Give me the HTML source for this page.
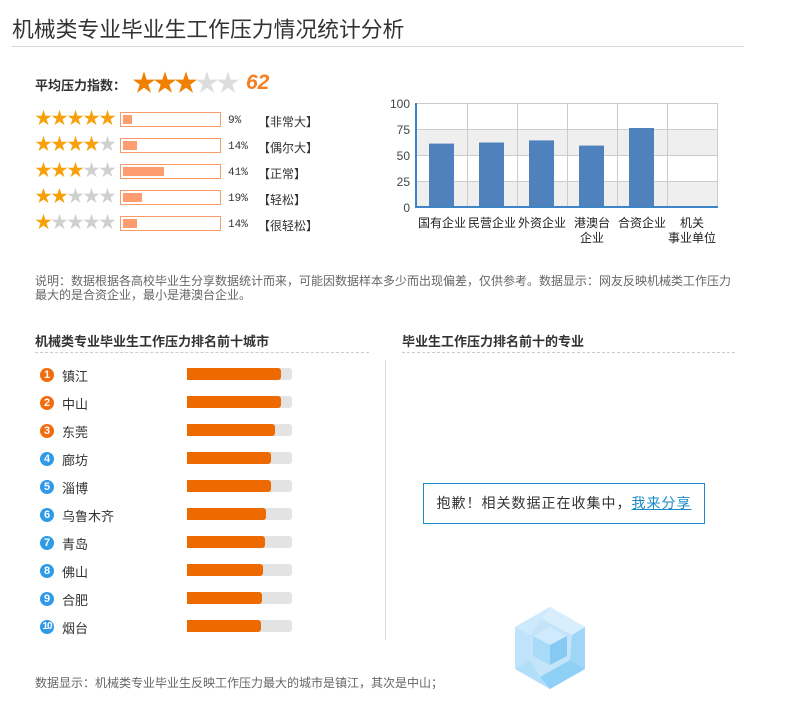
<!DOCTYPE html>
<html><head><meta charset="utf-8">
<style>
*{margin:0;padding:0;box-sizing:border-box}
body{width:796px;height:703px;background:#fff;position:relative;overflow:hidden;font-family:"Liberation Sans","Noto Sans CJK SC",sans-serif;color:#333}
.a{position:absolute;white-space:nowrap}
.star{font-size:17px;letter-spacing:-1px;line-height:15px}
.on{color:#f7a008}
.off{color:#d0d0d0}
.box{position:absolute;left:120px;width:101px;height:15px;border:1px solid #f99b68;}
.box i{position:absolute;left:2px;top:2px;height:9px;background:#fe9e70}
.pct{font-family:"Liberation Mono","Noto Sans CJK SC",monospace;font-size:11px;color:#333}
.lb{font-size:12px;color:#333}
.num{position:absolute;left:40px;width:14px;height:14px;border-radius:50%;color:#fff;font-size:11px;font-weight:bold;line-height:14px;text-align:center}
.city{position:absolute;left:62px;font-size:13px;color:#333}
.bar{position:absolute;left:187px;width:105px;height:12px;background:#e3e3e3;border-radius:3px}
.bar i{position:absolute;left:0;top:0;height:12px;background:#ec6a00;border-radius:0 3px 3px 0}
</style></head><body>
<div class="a" style="left:12px;top:13px;font-size:21.8px;color:#333">机械类专业毕业生工作压力情况统计分析</div>
<div class="a" style="left:12px;top:46px;width:732px;height:1px;background:#d8d8d8"></div>

<div class="a" style="left:35px;top:75px;font-size:13px;font-weight:bold;color:#333">平均压力指数：</div>
<div class="a" style="left:132px;top:71px;font-size:24px;line-height:26px;letter-spacing:-3px"><span class="on" style="color:#f08000">★★★</span><span class="off" style="color:#ddd">★★</span></div>
<div class="a" style="left:246px;top:71px;font-size:21px;font-weight:bold;font-style:italic;color:#f57f21">62</div>

<div class="a star" style="left:35px;top:111px"><span class="on">★★★★★</span></div>
<div class="box" style="top:112px"><i style="width:9px"></i></div>
<div class="a pct" style="left:228px;top:115px">9%</div><div class="a lb" style="left:258px;top:113px">【非常大】</div>

<div class="a star" style="left:35px;top:137px"><span class="on">★★★★</span><span class="off">★</span></div>
<div class="box" style="top:138px"><i style="width:14px"></i></div>
<div class="a pct" style="left:228px;top:141px">14%</div><div class="a lb" style="left:258px;top:139px">【偶尔大】</div>

<div class="a star" style="left:35px;top:163px"><span class="on">★★★</span><span class="off">★★</span></div>
<div class="box" style="top:164px"><i style="width:41px"></i></div>
<div class="a pct" style="left:228px;top:167px">41%</div><div class="a lb" style="left:258px;top:165px">【正常】</div>

<div class="a star" style="left:35px;top:189px"><span class="on">★★</span><span class="off">★★★</span></div>
<div class="box" style="top:190px"><i style="width:19px"></i></div>
<div class="a pct" style="left:228px;top:193px">19%</div><div class="a lb" style="left:258px;top:191px">【轻松】</div>

<div class="a star" style="left:35px;top:215px"><span class="on">★</span><span class="off">★★★★</span></div>
<div class="box" style="top:216px"><i style="width:14px"></i></div>
<div class="a pct" style="left:228px;top:219px">14%</div><div class="a lb" style="left:258px;top:217px">【很轻松】</div>

<svg class="a" style="left:380px;top:90px" width="340" height="160" font-family="Liberation Sans,Noto Sans CJK SC,sans-serif">
<rect x="36" y="13" width="301" height="26" fill="#fff"/>
<rect x="36" y="39" width="301" height="26" fill="#efefef"/>
<rect x="36" y="91" width="301" height="26" fill="#efefef"/>
<g stroke="#ccc" stroke-width="1">
<line x1="36" y1="13.5" x2="337" y2="13.5"/><line x1="36" y1="39.5" x2="337" y2="39.5"/><line x1="36" y1="65.5" x2="337" y2="65.5"/><line x1="36" y1="91.5" x2="337" y2="91.5"/>
<line x1="87.5" y1="13" x2="87.5" y2="117"/><line x1="137.5" y1="13" x2="137.5" y2="117"/><line x1="187.5" y1="13" x2="187.5" y2="117"/><line x1="237.5" y1="13" x2="237.5" y2="117"/><line x1="287.5" y1="13" x2="287.5" y2="117"/><line x1="337.5" y1="13" x2="337.5" y2="117"/>
</g>
<g fill="#4f81bd">
<rect x="49" y="53.6" width="25" height="63.4"/>
<rect x="99" y="52.5" width="25" height="64.5"/>
<rect x="149" y="50.4" width="25" height="66.6"/>
<rect x="199" y="55.6" width="25" height="61.4"/>
<rect x="249" y="38" width="25" height="79"/>
</g>
<rect x="35" y="13" width="2" height="105" fill="#3d85c6"/>
<rect x="35" y="116" width="303" height="2" fill="#3d85c6"/>
<g font-size="12" fill="#444" text-anchor="end">
<text x="30" y="18">100</text><text x="30" y="44">75</text><text x="30" y="70">50</text><text x="30" y="96">25</text><text x="30" y="122">0</text>
</g>
<g font-size="12" fill="#222" text-anchor="middle">
<text x="62" y="137">国有企业</text><text x="112" y="137">民营企业</text><text x="162" y="137">外资企业</text>
<text x="212" y="137">港澳台</text><text x="212" y="152">企业</text>
<text x="262" y="137">合资企业</text>
<text x="312" y="137">机关</text><text x="312" y="152">事业单位</text>
</g>
</svg>

<div class="a" style="left:35px;top:274px;font-size:12px;color:#666;line-height:14px">说明：数据根据各高校毕业生分享数据统计而来，可能因数据样本多少而出现偏差，仅供参考。数据显示：网友反映机械类工作压力<br>最大的是合资企业，最小是港澳台企业。</div>

<div class="a" style="left:35px;top:331px;font-size:13px;font-weight:bold;color:#333">机械类专业毕业生工作压力排名前十城市</div>
<div class="a" style="left:35px;top:352px;width:334px;border-top:1px dashed #ccc"></div>
<div class="a" style="left:402px;top:331px;font-size:13px;font-weight:bold;color:#333">毕业生工作压力排名前十的专业</div>
<div class="a" style="left:402px;top:352px;width:333px;border-top:1px dashed #ccc"></div>
<div class="a" style="left:385px;top:360px;width:1px;height:280px;background:#ddd"></div>

<div class="num" style="top:368px;background:#f26c0d">1</div><div class="city" style="top:366px">镇江</div><div class="bar" style="top:368px"><i style="width:94px"></i></div>
<div class="num" style="top:396px;background:#f26c0d">2</div><div class="city" style="top:394px">中山</div><div class="bar" style="top:396px"><i style="width:94px"></i></div>
<div class="num" style="top:424px;background:#f26c0d">3</div><div class="city" style="top:422px">东莞</div><div class="bar" style="top:424px"><i style="width:88px"></i></div>
<div class="num" style="top:452px;background:#2f9ae8">4</div><div class="city" style="top:450px">廊坊</div><div class="bar" style="top:452px"><i style="width:84px"></i></div>
<div class="num" style="top:480px;background:#2f9ae8">5</div><div class="city" style="top:478px">淄博</div><div class="bar" style="top:480px"><i style="width:84px"></i></div>
<div class="num" style="top:508px;background:#2f9ae8">6</div><div class="city" style="top:506px">乌鲁木齐</div><div class="bar" style="top:508px"><i style="width:79px"></i></div>
<div class="num" style="top:536px;background:#2f9ae8">7</div><div class="city" style="top:534px">青岛</div><div class="bar" style="top:536px"><i style="width:78px"></i></div>
<div class="num" style="top:564px;background:#2f9ae8">8</div><div class="city" style="top:562px">佛山</div><div class="bar" style="top:564px"><i style="width:76px"></i></div>
<div class="num" style="top:592px;background:#2f9ae8">9</div><div class="city" style="top:590px">合肥</div><div class="bar" style="top:592px"><i style="width:75px"></i></div>
<div class="num" style="top:620px;background:#2f9ae8;font-size:10px;letter-spacing:-1px">10</div><div class="city" style="top:618px">烟台</div><div class="bar" style="top:620px"><i style="width:74px"></i></div>

<div class="a" style="left:423px;top:483px;width:282px;height:41px;border:1px solid #1a8bc8;font-size:14px;color:#333;line-height:39px;text-align:center;letter-spacing:1px">抱歉！相关数据正在收集中，<span style="color:#1a8bc8;text-decoration:underline">我来分享</span></div>

<svg class="a" style="left:512px;top:605px" width="76" height="86" viewBox="0 0 76 86">
<polygon points="38,2 73,22 73,64 38,84 3,64 3,22" fill="#c4e4fa"/>
<polygon points="38,2 73,22 60,30 30,14" fill="#d8eefc"/>
<polygon points="73,22 73,64 58,55 60,30" fill="#9fd6f7"/>
<polygon points="73,64 38,84 28,72 58,55" fill="#8fd0f6"/>
<polygon points="38,84 3,64 18,55 28,72" fill="#b3defa"/>
<polygon points="3,64 3,22 18,30 18,55" fill="#bfe3fa"/>
<polygon points="3,22 38,2 30,14 18,30" fill="#cdeafc"/>
<polygon points="38,22 55,31 38,40 21,31" fill="#cfeafc"/>
<polygon points="21,31 38,40 38,60 21,51" fill="#a8dbf8"/>
<polygon points="55,31 38,40 38,60 55,51" fill="#86caf3"/>
</svg>

<div class="a" style="left:35px;top:674px;font-size:12px;color:#666">数据显示：机械类专业毕业生反映工作压力最大的城市是镇江，其次是中山；</div>
</body></html>
